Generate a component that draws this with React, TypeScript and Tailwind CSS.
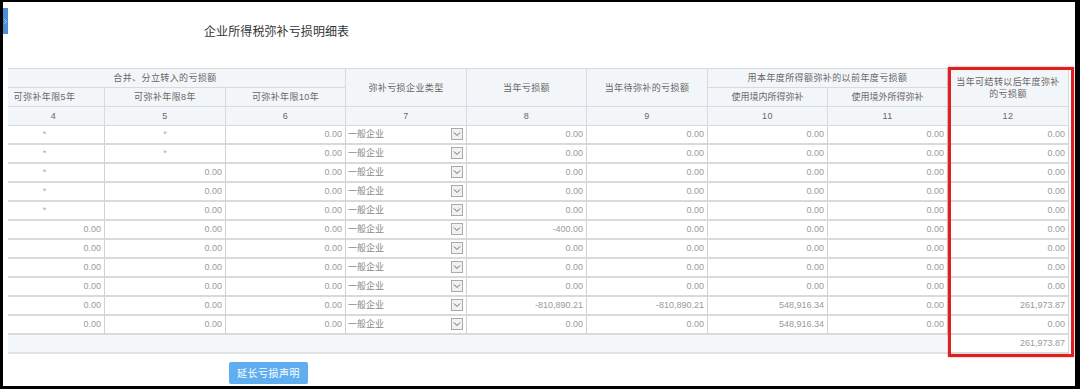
import React from "react";

type Row = [string, string, string, string, string, string, string, string];

const rows: Row[] = [
  ["*", "*", "0.00", "0.00", "0.00", "0.00", "0.00", "0.00"],
  ["*", "*", "0.00", "0.00", "0.00", "0.00", "0.00", "0.00"],
  ["*", "0.00", "0.00", "0.00", "0.00", "0.00", "0.00", "0.00"],
  ["*", "0.00", "0.00", "0.00", "0.00", "0.00", "0.00", "0.00"],
  ["*", "0.00", "0.00", "0.00", "0.00", "0.00", "0.00", "0.00"],
  ["0.00", "0.00", "0.00", "-400.00", "0.00", "0.00", "0.00", "0.00"],
  ["0.00", "0.00", "0.00", "0.00", "0.00", "0.00", "0.00", "0.00"],
  ["0.00", "0.00", "0.00", "0.00", "0.00", "0.00", "0.00", "0.00"],
  ["0.00", "0.00", "0.00", "0.00", "0.00", "0.00", "0.00", "0.00"],
  ["0.00", "0.00", "0.00", "-810,890.21", "-810,890.21", "548,916.34", "0.00", "261,973.87"],
  ["0.00", "0.00", "0.00", "0.00", "0.00", "548,916.34", "0.00", "0.00"],
];

const hd =
  "flex items-center justify-center text-center bg-[#f3f6f9] border-r border-b border-[#d5dbe0] text-[9px] text-[#666] tracking-[0.4px] leading-[12px]";

const td =
  "flex items-center border-r border-r-[#d2d2d2] border-b-2 border-b-[#dadada] text-[9px] text-[#9a9a9a] h-[19px] leading-none";

function Val({ v }: { v: string }) {
  if (v === "*") {
    return <div className={`${td} justify-center text-[8px] text-[#aaa]`}>*</div>;
  }
  return <div className={`${td} justify-end pr-[3px]`}>{v}</div>;
}

function SelectCell() {
  return (
    <div className={`${td} relative justify-start pl-[2px] text-[#888] text-[8.5px]`}>
      <span>一般企业</span>
      <span className="absolute right-[3px] top-[2px] w-[12px] h-[12px] border border-[#a9a9a9] bg-[#f1f1f1] flex items-center justify-center">
        <svg width="8" height="6" viewBox="0 0 8 6">
          <path d="M1 1.5 L4 4.5 L7 1.5" fill="none" stroke="#666" strokeWidth="1" />
        </svg>
      </span>
    </div>
  );
}

export default function App() {
  return (
    <div className="w-[1080px] h-[389px] bg-black pt-[2px] pl-[3px] pr-[5px] pb-[3px] font-['Liberation_Sans','Noto_Sans_CJK_SC',sans-serif]">
      <div className="relative w-full h-full bg-white flex flex-col">
        <div className="absolute left-0 top-[6px] w-[5px] h-[26px] bg-[#4a90d9] flex items-center justify-center">
          <svg width="3" height="5" viewBox="0 0 3 5">
            <path d="M0.5 0.5 L2.5 2.5 L0.5 4.5" fill="none" stroke="#cfe3f7" strokeWidth="0.8" />
          </svg>
        </div>

        <div className="pt-[22px] pl-[201px] text-[12px] leading-[16px] text-[#333] tracking-[0.1px]">
          企业所得税弥补亏损明细表
        </div>

        <div className="relative mt-[28px] ml-[5px] w-[1061px]">
          <div className="w-[1061px] overflow-hidden">
            <div className="ml-[-23px] w-[1084px] grid grid-cols-[120px_121px_120px_121px_120px_121px_120px_120px_121px] auto-rows-[19px] border-t border-[#d5dbe0]">
              {/* header row 1 */}
              <div className={`${hd} col-span-3`}>合并、分立转入的亏损额</div>
              <div className={`${hd} row-span-2`}>弥补亏损企业类型</div>
              <div className={`${hd} row-span-2`}>当年亏损额</div>
              <div className={`${hd} row-span-2`}>当年待弥补的亏损额</div>
              <div className={`${hd} col-span-2`}>用本年度所得额弥补的以前年度亏损额</div>
              <div className={`${hd} row-span-2 flex-col text-[9.5px] tracking-[0.3px]`}>
                <span>当年可结转以后年度弥补</span>
                <span>的亏损额</span>
              </div>
              {/* header row 2 */}
              <div className={hd}>可弥补年限5年</div>
              <div className={hd}>可弥补年限8年</div>
              <div className={hd}>可弥补年限10年</div>
              <div className={`${hd} text-[8px] tracking-normal`}>使用境内所得弥补</div>
              <div className={`${hd} text-[8px] tracking-normal`}>使用境外所得弥补</div>
              {/* number row */}
              <div className={`${hd} pl-[18px] text-[9.5px]`}>4</div>
              {["5", "6", "7", "8", "9", "10", "11", "12"].map((n) => (
                <div key={n} className={`${hd} text-[9.5px]`}>
                  {n}
                </div>
              ))}
              {/* data rows */}
              {rows.map((r, i) => (
                <React.Fragment key={i}>
                  <Val v={r[0]} />
                  <Val v={r[1]} />
                  <Val v={r[2]} />
                  <SelectCell />
                  <Val v={r[3]} />
                  <Val v={r[4]} />
                  <Val v={r[5]} />
                  <Val v={r[6]} />
                  <Val v={r[7]} />
                </React.Fragment>
              ))}
              {/* total row */}
              <div className="col-span-8 h-[19px] bg-[#f5f8fa] border-b-2 border-b-[#dfe3e6]" />
              <div className={`${td} justify-end pr-[3px] bg-white border-l border-l-[#d2d2d2]`}>261,973.87</div>
            </div>
          </div>
          <div className="absolute left-[940px] top-[-1px] w-[126px] h-[290px] border-[3px] border-[#e0201e] shadow-[0_0_2px_rgba(200,0,0,0.4)]" />
        </div>

        <div className="mt-[8px] ml-[226px] w-[79px] h-[22px] bg-[#5eaef0] rounded-[2px] flex items-center justify-center text-white text-[10px] tracking-[0.5px]">
          延长亏损声明
        </div>
      </div>
    </div>
  );
}
